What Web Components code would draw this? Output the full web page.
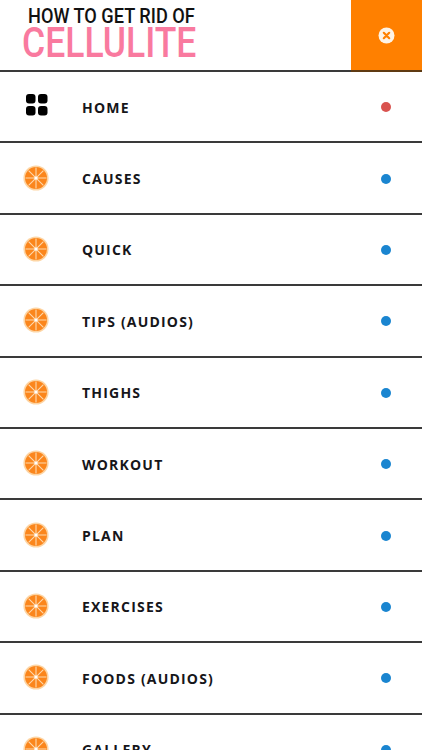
<!DOCTYPE html>
<html lang="en">
<head>
<meta charset="utf-8">
<title>How to get rid of cellulite</title>
<style>
  html, body { margin: 0; height: 100%; overflow: hidden; background: #fff; }
</style>
</head>
<body>
<side-menu>
  <menu-header></menu-header>
  <menu-item icon="grid" dot="#d9534f">HOME</menu-item>
  <menu-item>CAUSES</menu-item>
  <menu-item>QUICK</menu-item>
  <menu-item>TIPS (AUDIOS)</menu-item>
  <menu-item>THIGHS</menu-item>
  <menu-item>WORKOUT</menu-item>
  <menu-item>PLAN</menu-item>
  <menu-item>EXERCISES</menu-item>
  <menu-item>FOODS (AUDIOS)</menu-item>
  <menu-item>GALLERY</menu-item>
</side-menu>
<script>
  class SideMenu extends HTMLElement {
    connectedCallback() {
      const root = this.attachShadow({ mode: "open" });
      root.innerHTML = `
        <style>
          :host { display: flex; flex-direction: column; height: 750px; overflow: hidden; background: #fff; }
        </style>
        <slot></slot>`;
    }
  }

  class MenuHeader extends HTMLElement {
    connectedCallback() {
      const root = this.attachShadow({ mode: "open" });
      root.innerHTML = `
        <style>
          :host { display: flex; flex: none; height: 72px; box-sizing: border-box; border-bottom: 2px solid #3a3a3a; }
          .logo { flex: 1; padding: 6px 0 0 22px; font-family: Roboto, "Liberation Sans", sans-serif; font-weight: 500; overflow: hidden; }
          .top, .big { display: block; transform-origin: 0 0; white-space: nowrap; }
          .top { color: #111; font-size: 21px; line-height: 20px; margin-left: 6px; transform: scaleX(.865); }
          .big { color: #f97a9f; font-size: 42px; line-height: 33px; transform: scaleX(.845); }
          .close { flex: none; width: 71px; margin-bottom: -2px; border-bottom: 2px solid #5f3a12; background: #ff8000;
                   display: flex; align-items: center; justify-content: center; }
          svg { display: block; }
        </style>
        <div class="logo">
          <span class="top">HOW TO GET RID OF</span>
          <span class="big">CELLULITE</span>
        </div>
        <div class="close">
          <svg width="17" height="17" viewBox="0 0 17 17">
            <circle cx="8.5" cy="8.5" r="8" fill="#fdf3e6"/>
            <path d="M5.8 5.8l5.4 5.4M11.2 5.8l-5.4 5.4" stroke="#ff8000" stroke-width="2.2" stroke-linecap="round"/>
          </svg>
        </div>`;
    }
  }

  const ICONS = {
    grid: `<svg width="22" height="22" viewBox="0 0 22 22" fill="#000" style="margin:-2px 0 0 1px">
        <rect x="0" y="0" width="9.5" height="9.5" rx="3"/><rect x="12" y="0" width="9.5" height="9.5" rx="3"/>
        <rect x="0" y="12" width="9.5" height="9.5" rx="3"/><rect x="12" y="12" width="9.5" height="9.5" rx="3"/>
      </svg>`,
    orange: `<svg width="26" height="26" viewBox="0 0 26 26">
        <circle cx="13" cy="13" r="12.6" fill="#fdd5a4"/>
        <circle cx="13" cy="13" r="11" fill="#fb861c"/>
        <path d="M13 2.5v21M2.5 13h21M5.6 5.6l14.8 14.8M20.4 5.6L5.6 20.4" stroke="#fdd9ae" stroke-width="1.1"/>
        <circle cx="13" cy="13" r="1.6" fill="#fff"/>
      </svg>`
  };

  class MenuItem extends HTMLElement {
    connectedCallback() {
      const icon = ICONS[this.getAttribute("icon") || "orange"];
      const dot = this.getAttribute("dot") || "#1a85d0";
      const root = this.attachShadow({ mode: "open" });
      root.innerHTML = `
        <style>
          :host { display: grid; grid-template-columns: 82px 1fr 41px; align-items: center; flex: none;
                  height: 71.4px; box-sizing: border-box; border-bottom: 2px solid #3a3a3a; padding-top: 1px; }
          .icon { display: flex; justify-content: center; margin-top: -2px; width: 72px; }
          .label { font: 700 14px "Open Sans", sans-serif; letter-spacing: 1.2px; color: #16161a; }
          .dot { width: 10px; height: 10px; border-radius: 50%; background: ${dot}; }
        </style>
        <div class="icon">${icon}</div>
        <div class="label"><slot></slot></div>
        <div class="dot"></div>`;
    }
  }

  customElements.define("side-menu", SideMenu);
  customElements.define("menu-header", MenuHeader);
  customElements.define("menu-item", MenuItem);
</script>
</body>
</html>
